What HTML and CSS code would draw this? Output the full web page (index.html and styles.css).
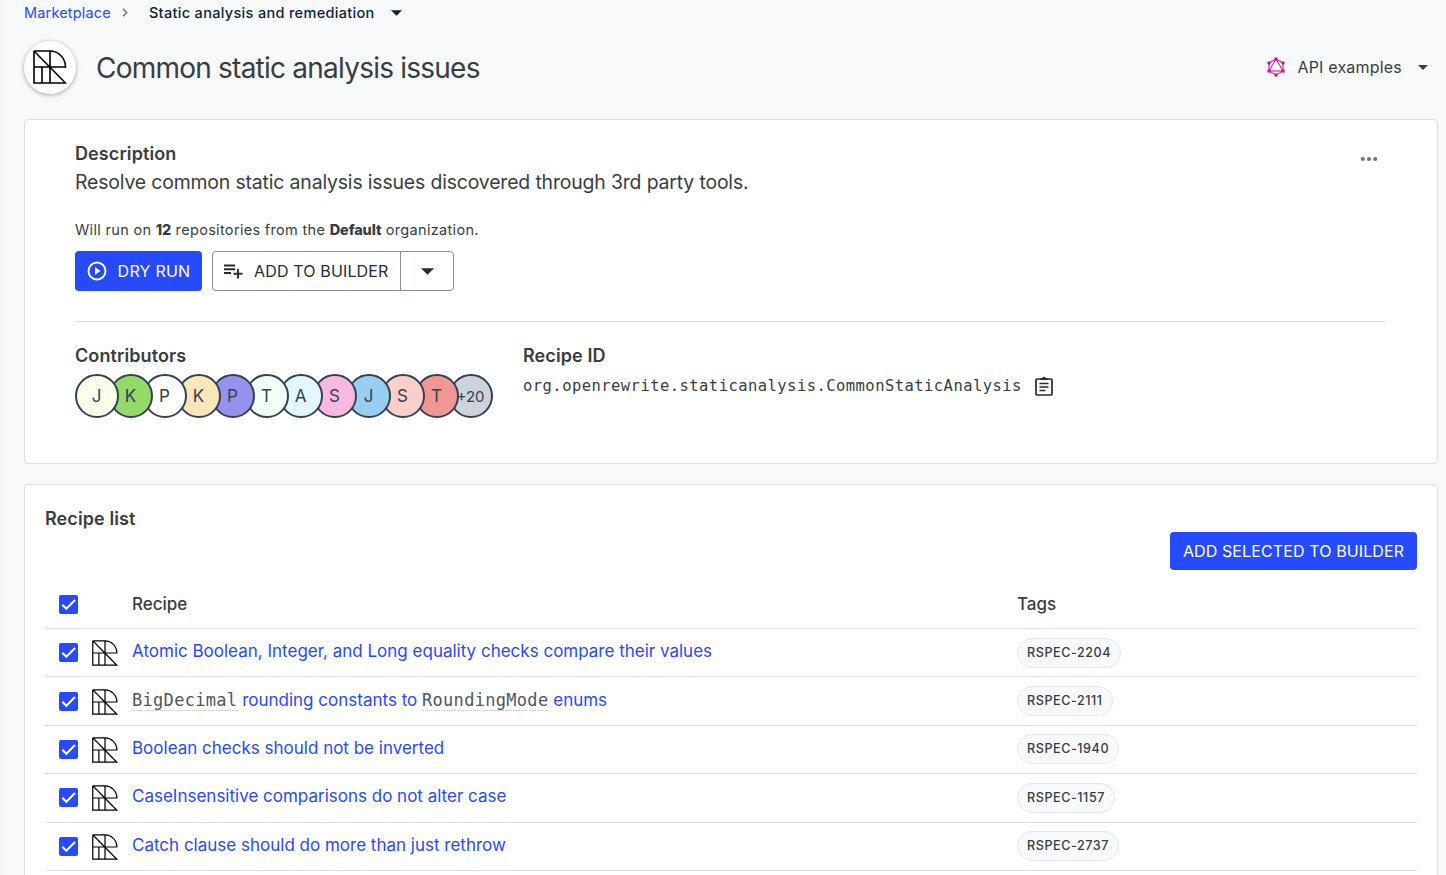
FILE: index.html
```
<!DOCTYPE html>
<html lang="en">
<head>
<meta charset="utf-8">
<title>Common static analysis issues</title>
<link rel="stylesheet" href="styles.css">
</head>
<body>
<svg class="defs" aria-hidden="true">
  <symbol id="logo" viewBox="0 0 34 34">
    <path d="M1 1h16a15.500 16 0 0 1 15.500 16H1M1 1v32h31.500L1 1M17 1v32M9 17v16" fill="none" stroke="#000" stroke-width="1.600"/>
  </symbol>
  <symbol id="check" viewBox="0 0 19 19">
    <rect width="19" height="19" rx="2" fill="#264bff"/>
    <path d="M3.300 9.800l4 4L16 5" fill="none" stroke="#fff" stroke-width="2"/>
  </symbol>
</svg>
<div class="page">
  <nav class="crumbs">
    <a class="crumb-link">Marketplace</a>
    <svg class="crumb-sep" viewBox="0 0 6 9"><path d="M1 .8l3.600 3.700L1 8.200" fill="none" stroke="#69727b" stroke-width="1.400"/></svg>
    <span class="crumb-current">Static analysis and remediation</span>
    <svg class="caret caret-navy" viewBox="0 0 10 5"><path d="M0 0h10L5 5z"/></svg>
  </nav>
  <header class="heading">
    <div class="badge"><svg><use href="#logo"/></svg></div>
    <h1>Common static analysis issues</h1>
    <div class="api">
      <svg class="graphql" viewBox="0 0 18 20">
        <path d="M9 2l7 4v8l-7 4-7-4V6zM9 2L2 14h14z" fill="none" stroke="#e10098" stroke-width="1"/>
        <g fill="#e10098"><circle cx="9" cy="2" r="1.700"/><circle cx="16" cy="6" r="1.700"/><circle cx="16" cy="14" r="1.700"/><circle cx="9" cy="18" r="1.700"/><circle cx="2" cy="14" r="1.700"/><circle cx="2" cy="6" r="1.700"/></g>
      </svg>
      <span>API examples</span>
      <svg class="caret" viewBox="0 0 10 5"><path d="M0 0h10L5 5z"/></svg>
    </div>
  </header>
  <section class="card summary">
    <div class="summary-top">
      <h2>Description</h2>
      <svg class="more" viewBox="0 0 18 6"><g fill="#707579"><circle cx="2.800" cy="3" r="2.100"/><circle cx="9" cy="3" r="2.100"/><circle cx="15.200" cy="3" r="2.100"/></g></svg>
    </div>
    <p class="lead">Resolve common static analysis issues discovered through 3rd party tools.</p>
    <p class="scope">Will run on <b>12</b> repositories from the <b>Default</b> organization.</p>
    <div class="actions">
      <button class="btn primary dry">
        <svg width="20" height="20" viewBox="0 0 20 20"><circle cx="10" cy="10" r="8.500" fill="none" stroke="#fff" stroke-width="1.900"/><path d="M8 6v8l5.500-4z" fill="#fff"/></svg>
        DRY RUN</button>
      <div class="split">
        <button class="btn plain">
          <svg width="19" height="15" viewBox="0 0 19 15"><path d="M0 1.500h11M0 5.200h11M0 9h7M14 5v9.500M9.500 9.800h9" stroke="#262c33" stroke-width="1.900"/></svg>
          ADD TO BUILDER</button>
        <button class="btn plain drop"><svg width="13" height="7" viewBox="0 0 12 6"><path d="M0 0h12L6 6z" fill="#262c33"/></svg></button>
      </div>
    </div>
    <div class="details">
      <div class="contributors">
        <h2>Contributors</h2>
        <div class="avatars">
          <span class="avatar c1">J</span><span class="avatar c2">K</span><span class="avatar c3">P</span><span class="avatar c4">K</span><span class="avatar c5">P</span><span class="avatar c6">T</span><span class="avatar c7">A</span><span class="avatar c8">S</span><span class="avatar c9">J</span><span class="avatar c10">S</span><span class="avatar c11">T</span><span class="avatar more-count">+20</span>
        </div>
      </div>
      <div>
        <h2>Recipe ID</h2>
        <div class="recipe-id">
          <code>org.openrewrite.staticanalysis.CommonStaticAnalysis</code>
          <svg width="18" height="20" viewBox="0 0 18 20"><path d="M2 3h14q1 0 1 1v14q0 1-1 1H2q-1 0-1-1V4q0-1 1-1zM4.500 7.500h9M4.500 11h9M4.500 14.500h6" fill="none" stroke="#262c33" stroke-width="1.700"/><path d="M5.500 2H7.200a2 2 0 0 1 3.600 0h1.700v2h-7z" fill="#262c33"/></svg>
        </div>
      </div>
    </div>
  </section>
  <section class="card recipes">
    <h2>Recipe list</h2>
    <button class="btn primary selected">ADD SELECTED TO BUILDER</button>
    <div class="row head"><svg class="check"><use href="#check"/></svg><span></span><span>Recipe</span><span>Tags</span></div>
    <div class="row"><svg class="check"><use href="#check"/></svg><svg class="logo"><use href="#logo"/></svg><a>Atomic Boolean, Integer, and Long equality checks compare their values</a><span class="tag">RSPEC-2204</span></div>
    <div class="row"><svg class="check"><use href="#check"/></svg><svg class="logo"><use href="#logo"/></svg><a><code>BigDecimal</code> rounding constants to <code>RoundingMode</code> enums</a><span class="tag">RSPEC-2111</span></div>
    <div class="row"><svg class="check"><use href="#check"/></svg><svg class="logo"><use href="#logo"/></svg><a>Boolean checks should not be inverted</a><span class="tag">RSPEC-1940</span></div>
    <div class="row"><svg class="check"><use href="#check"/></svg><svg class="logo"><use href="#logo"/></svg><a>CaseInsensitive comparisons do not alter case</a><span class="tag">RSPEC-1157</span></div>
    <div class="row"><svg class="check"><use href="#check"/></svg><svg class="logo"><use href="#logo"/></svg><a>Catch clause should do more than just rethrow</a><span class="tag">RSPEC-2737</span></div>
  </section>
</div>
</body>
</html>
```
FILE: styles.css
```
* { box-sizing: border-box; }
body {
  margin: 0;
  height: 875px;
  overflow: hidden;
  background: linear-gradient(90deg, #f3f4f6, #f8f9fb 6px);
  color: #373d43;
  font-family: Inter, sans-serif;
  font-size: 17px;
}
.defs { display: none; }
svg { flex: none; display: block; }
h1, h2, p { margin: 0; font-weight: 400; }
.page { padding: 0 8px 0 24px; }

.crumbs { display: flex; align-items: center; height: 25px; font-size: 14.5px; letter-spacing: .17px; }
.crumb-link { color: #264bff; }
.crumb-sep { width: 6px; height: 9px; margin: 0 21px 0 11px; }
.crumb-current { color: #0b1f3f; font-weight: 500; letter-spacing: .32px; }
.caret { width: 10px; height: 5px; fill: #373d43; }
.caret-navy { width: 11px; height: 6px; margin-left: 16px; fill: #0b1f3f; }

.heading { display: flex; align-items: center; height: 84px; }
.badge { width: 52px; height: 53px; border-radius: 50%; background: #fff; box-shadow: 0 1px 4px rgba(0, 0, 0, .35); display: flex; align-items: center; justify-content: center; }
.badge svg { width: 34px; height: 34px; }
h1 { margin: 2px 0 0 20px; font-size: 28px; letter-spacing: -.77px; }
.api { display: flex; align-items: center; margin: 0 10px 0 auto; font-size: 16px; letter-spacing: .2px; }
.api .graphql { width: 18px; height: 20px; margin-right: 12px; }
.api .caret { margin-left: 16px; }

.card { background: #fff; border: 1px solid #dedfe1; border-radius: 4px; }
h2 { font-size: 18px; line-height: 24px; font-weight: 600; letter-spacing: .1px; }
.summary { margin-top: 10px; height: 345px; padding: 22px 50px 0; }
.summary-top { display: flex; align-items: center; justify-content: space-between; }
.more { width: 18px; height: 6px; margin: 9px 9px 0 0; }
.lead { margin-top: 2px; font-size: 19.4px; line-height: 28px; letter-spacing: -.145px; }
.scope { margin-top: 23px; font-size: 14.5px; line-height: 22px; letter-spacing: .32px; }
.scope b { font-weight: 800; letter-spacing: -.1px; }
.actions { display: flex; gap: 10px; margin-top: 10px; height: 40px; }
.btn { display: flex; align-items: center; border: 0; background: none; padding: 0; font: 16px Inter, sans-serif; letter-spacing: .15px; white-space: nowrap; }
.primary { background: #264bff; color: #fff; border-radius: 4px; justify-content: center; }
.dry { width: 127px; gap: 11px; letter-spacing: .25px; }
.split { display: flex; width: 242px; border: 1px solid #8b8e92; border-radius: 4px; }
.plain { color: #262c33; width: 187px; gap: 11px; padding-left: 11px; }
.drop { flex: 1; justify-content: center; padding: 0; border-left: 1px solid #8b8e92; }
.details { display: flex; margin-top: 30px; padding-top: 22px; border-top: 1px solid #dedfe1; }
.contributors { width: 448px; }
.avatars { display: flex; margin-top: 6px; }
.avatar { width: 44px; height: 44px; border: 2px solid #334155; border-radius: 50%; display: flex; align-items: center; justify-content: center; color: #334155; font-size: 17px; margin-right: -10px; padding-right: 1px; position: relative; }
.c1 { background: #faffe7; z-index: 12; } .c2 { background: #93da68; z-index: 11; }
.c3 { background: #fffffb; z-index: 10; } .c4 { background: #fae7b9; z-index: 9; }
.c5 { background: #9691ec; z-index: 8; } .c6 { background: #f1fff5; z-index: 7; }
.c7 { background: #e2f7ff; z-index: 6; } .c8 { background: #f8b8df; z-index: 5; }
.c9 { background: #98cff1; z-index: 4; } .c10 { background: #facfca; z-index: 3; }
.c11 { background: #ef9893; z-index: 2; }
.more-count { background: #ced2da; z-index: 1; font-size: 15px; }
.recipe-id { display: flex; align-items: center; gap: 13px; margin-top: 6px; }
code { font-family: "DejaVu Sans Mono", monospace; }
.recipe-id code { font-size: 15.5px; letter-spacing: .45px; line-height: 24px; }
.recipe-id svg { margin-top: -1px; }

.recipes { margin-top: 20px; padding: 22px 20px 0; height: 420px; }
.selected { width: 247px; height: 38px; margin: 1px 0 10px auto; letter-spacing: .11px; }
.row { display: grid; grid-template-columns: 47px 40px 885px 1fr; align-items: center; height: 48.400px; border-bottom: 1px solid #dedfe1; }
.row a { color: #264bff; margin-top: -3px; }
.row code { color: #50565c; letter-spacing: .3px; border-bottom: 1px dotted #c4c7ca; }
.row.head { height: 49px; font-weight: 500; }
.check { width: 19px; height: 19px; margin-left: 14px; }
.logo { width: 26px; height: 26px; margin-top: 1px; }
.tag { justify-self: start; height: 30px; padding: 0 9px; border: 1px solid #e1e7fb; border-radius: 15px; background: #f8f9fb; font-size: 12.6px; line-height: 28px; letter-spacing: .55px; font-weight: 500; }
```
